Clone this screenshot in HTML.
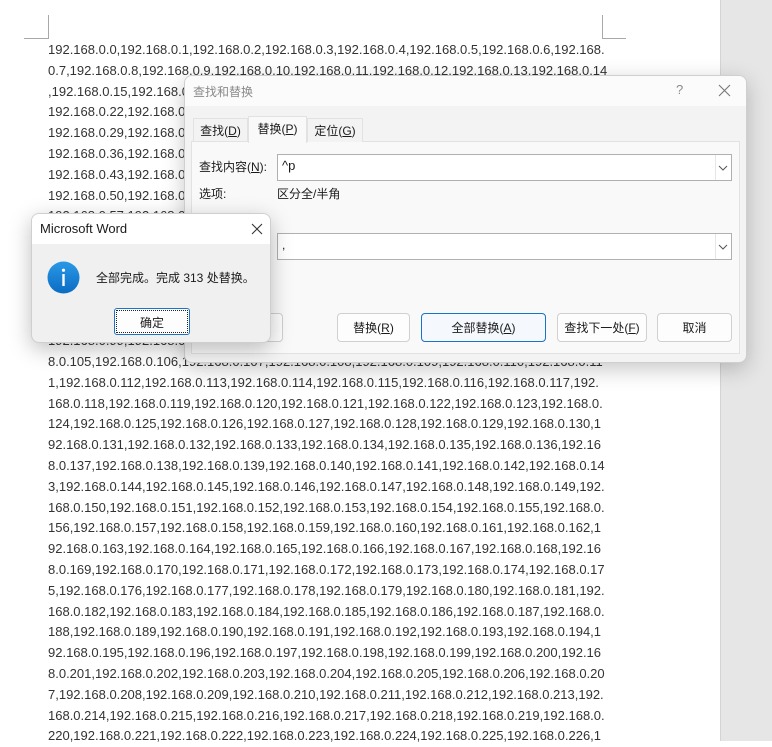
<!DOCTYPE html>
<html><head><meta charset="utf-8">
<style>
*{margin:0;padding:0;box-sizing:border-box}
body{width:772px;height:741px;overflow:hidden;background:#fff;position:relative;font-family:"Liberation Sans","Noto Sans CJK SC",sans-serif}
.gray{position:absolute;left:720px;top:0;width:52px;height:741px;background:#e6e6e6;border-left:1px solid #d4d4d4}
.mk{position:absolute;border-color:#a8a8a8;border-style:solid;border-width:0}
#doc{position:absolute;left:48px;top:40px;font-size:13px;color:#333;line-height:20.8px;white-space:nowrap}
.dlg{position:absolute;left:184px;top:75px;width:563px;height:288px;background:#f3f3f3;border:1px solid #cfcfcf;border-radius:8px;box-shadow:0 6px 22px rgba(0,0,0,.22);overflow:hidden;font-size:12px;color:#1a1a1a}
.dlg .tb{height:30px;background:#fbfbfb;position:relative}
.tab{position:absolute;top:42px;height:24px;padding-top:3px;text-align:center;border:1px solid #e2e2e2;border-bottom:none;background:#f3f3f3}
.panel{position:absolute;left:6px;top:65px;width:549px;height:213px;background:#f9f9f9;border:1px solid #e2e2e2}
.inp{position:absolute;background:#fff;border:1px solid #b0b0b0;height:27px}
.inp .dd{position:absolute;right:0;top:0;width:16px;height:25px;border-left:1px solid #e6e6e6}
.btn{position:absolute;top:237px;height:29px;background:#fdfdfd;border:1px solid #d0d0d0;border-radius:4px;text-align:center;padding-top:5px;font-size:12px}
.msg{position:absolute;left:31px;top:213px;width:240px;height:130px;background:#f0f0f0;border:1px solid #cfcfcf;border-radius:8px;box-shadow:0 6px 22px rgba(0,0,0,.25);overflow:hidden;font-size:12px;color:#1a1a1a}
u{text-decoration:underline}
</style></head><body>
<div class="gray"></div>
<div class="mk" style="left:24px;top:15px;width:25px;height:24px;border-right-width:1px;border-bottom-width:1px"></div>
<div class="mk" style="left:602px;top:15px;width:24px;height:24px;border-left-width:1px;border-bottom-width:1px"></div>
<div id="doc">
192.168.0.0,192.168.0.1,192.168.0.2,192.168.0.3,192.168.0.4,192.168.0.5,192.168.0.6,192.168.<br>
0.7,192.168.0.8,192.168.0.9,192.168.0.10,192.168.0.11,192.168.0.12,192.168.0.13,192.168.0.14<br>
,192.168.0.15,192.168.0.16,192.168.0.17,192.168.0.18,192.168.0.19,192.168.0.20,192.168.0.21,<br>
192.168.0.22,192.168.0.23,192.168.0.24,192.168.0.25,192.168.0.26,192.168.0.27,192.168.0.28,<br>
192.168.0.29,192.168.0.30,192.168.0.31,192.168.0.32,192.168.0.33,192.168.0.34,192.168.0.35,<br>
192.168.0.36,192.168.0.37,192.168.0.38,192.168.0.39,192.168.0.40,192.168.0.41,192.168.0.42,<br>
192.168.0.43,192.168.0.44,192.168.0.45,192.168.0.46,192.168.0.47,192.168.0.48,192.168.0.49,<br>
192.168.0.50,192.168.0.51,192.168.0.52,192.168.0.53,192.168.0.54,192.168.0.55,192.168.0.56,<br>
192.168.0.57,192.168.0.58,192.168.0.59,192.168.0.60,192.168.0.61,192.168.0.62,192.168.0.63,<br>
192.168.0.64,192.168.0.65,192.168.0.66,192.168.0.67,192.168.0.68,192.168.0.69,192.168.0.70,<br>
192.168.0.71,192.168.0.72,192.168.0.73,192.168.0.74,192.168.0.75,192.168.0.76,192.168.0.77,<br>
192.168.0.78,192.168.0.79,192.168.0.80,192.168.0.81,192.168.0.82,192.168.0.83,192.168.0.84,<br>
192.168.0.85,192.168.0.86,192.168.0.87,192.168.0.88,192.168.0.89,192.168.0.90,192.168.0.91,<br>
192.168.0.92,192.168.0.93,192.168.0.94,192.168.0.95,192.168.0.96,192.168.0.97,192.168.0.98,<br>
192.168.0.99,192.168.0.100,192.168.0.101,192.168.0.102,192.168.0.103,192.168.0.104,192.16<br>
8.0.105,192.168.0.106,192.168.0.107,192.168.0.108,192.168.0.109,192.168.0.110,192.168.0.11<br>
1,192.168.0.112,192.168.0.113,192.168.0.114,192.168.0.115,192.168.0.116,192.168.0.117,192.<br>
168.0.118,192.168.0.119,192.168.0.120,192.168.0.121,192.168.0.122,192.168.0.123,192.168.0.<br>
124,192.168.0.125,192.168.0.126,192.168.0.127,192.168.0.128,192.168.0.129,192.168.0.130,1<br>
92.168.0.131,192.168.0.132,192.168.0.133,192.168.0.134,192.168.0.135,192.168.0.136,192.16<br>
8.0.137,192.168.0.138,192.168.0.139,192.168.0.140,192.168.0.141,192.168.0.142,192.168.0.14<br>
3,192.168.0.144,192.168.0.145,192.168.0.146,192.168.0.147,192.168.0.148,192.168.0.149,192.<br>
168.0.150,192.168.0.151,192.168.0.152,192.168.0.153,192.168.0.154,192.168.0.155,192.168.0.<br>
156,192.168.0.157,192.168.0.158,192.168.0.159,192.168.0.160,192.168.0.161,192.168.0.162,1<br>
92.168.0.163,192.168.0.164,192.168.0.165,192.168.0.166,192.168.0.167,192.168.0.168,192.16<br>
8.0.169,192.168.0.170,192.168.0.171,192.168.0.172,192.168.0.173,192.168.0.174,192.168.0.17<br>
5,192.168.0.176,192.168.0.177,192.168.0.178,192.168.0.179,192.168.0.180,192.168.0.181,192.<br>
168.0.182,192.168.0.183,192.168.0.184,192.168.0.185,192.168.0.186,192.168.0.187,192.168.0.<br>
188,192.168.0.189,192.168.0.190,192.168.0.191,192.168.0.192,192.168.0.193,192.168.0.194,1<br>
92.168.0.195,192.168.0.196,192.168.0.197,192.168.0.198,192.168.0.199,192.168.0.200,192.16<br>
8.0.201,192.168.0.202,192.168.0.203,192.168.0.204,192.168.0.205,192.168.0.206,192.168.0.20<br>
7,192.168.0.208,192.168.0.209,192.168.0.210,192.168.0.211,192.168.0.212,192.168.0.213,192.<br>
168.0.214,192.168.0.215,192.168.0.216,192.168.0.217,192.168.0.218,192.168.0.219,192.168.0.<br>
220,192.168.0.221,192.168.0.222,192.168.0.223,192.168.0.224,192.168.0.225,192.168.0.226,1
</div>

<div class="dlg">
  <div class="tb">
    <span style="position:absolute;left:8px;top:7px;color:#8a8a8a">查找和替换</span>
    <span style="position:absolute;left:491px;top:6px;color:#8a8a8a;font-size:13px">?</span>
    <svg style="position:absolute;left:533px;top:8px" width="13" height="13" viewBox="0 0 13 13"><path d="M1 1L12 12M12 1L1 12" stroke="#777" stroke-width="1.1"/></svg>
  </div>
  <div class="tab" style="left:8px;width:55px">查找(<u>D</u>)</div>
  <div class="panel"></div>
  <div class="tab" style="left:63px;width:59px;background:#f9f9f9;top:40px;height:27px;z-index:2">替换(<u>P</u>)</div>
  <div class="tab" style="left:122px;width:56px">定位(<u>G</u>)</div>
  <div style="position:absolute;left:14px;top:82px">查找内容(<u>N</u>):</div>
  <div class="inp" style="left:92px;top:78px;width:455px"><span style="position:absolute;left:4px;top:3px;font-size:13px">^p</span><div class="dd"><svg width="14" height="25" viewBox="0 0 14 25"><path d="M3 11l4 4 4-4" fill="none" stroke="#555"/></svg></div></div>
  <div style="position:absolute;left:14px;top:109px">选项:</div>
  <div style="position:absolute;left:92px;top:109px">区分全/半角</div>
  <div class="inp" style="left:92px;top:157px;width:455px"><span style="position:absolute;left:4px;top:4px">,</span><div class="dd"><svg width="14" height="25" viewBox="0 0 14 25"><path d="M3 11l4 4 4-4" fill="none" stroke="#555"/></svg></div></div>
  <div class="btn" style="left:20px;width:78px"></div>
  <div class="btn" style="left:152px;width:73px">替换(<u>R</u>)</div>
  <div class="btn" style="left:236px;width:125px;background:#f5f9fd;border-color:#1a73c8">全部替换(<u>A</u>)</div>
  <div class="btn" style="left:372px;width:90px">查找下一处(<u>F</u>)</div>
  <div class="btn" style="left:472px;width:75px">取消</div>
</div>

<div class="msg">
  <div style="height:30px;background:#fff;position:relative">
    <span style="position:absolute;left:8px;top:7px;font-size:13px">Microsoft Word</span>
    <svg style="position:absolute;left:219px;top:9px" width="12" height="12" viewBox="0 0 12 12"><path d="M1 1L11 11M11 1L1 11" stroke="#333" stroke-width="1.1"/></svg>
  </div>
  <svg style="position:absolute;left:15px;top:47px" width="33" height="33" viewBox="0 0 33 33"><defs><linearGradient id="g" x1="0" y1="0" x2="0" y2="1"><stop offset="0" stop-color="#2a98e6"/><stop offset="1" stop-color="#0a6cc4"/></linearGradient></defs><circle cx="16.5" cy="16.5" r="16" fill="url(#g)"/><rect x="15.3" y="13" width="2.4" height="12" fill="#fff"/><circle cx="16.5" cy="9.2" r="1.6" fill="#fff"/></svg>
  <div style="position:absolute;left:64px;top:55px">全部完成。完成 313 处替换。</div>
  <div style="position:absolute;left:82px;top:94px;width:76px;height:27px;border:1px solid #1a73c8;border-radius:3px;background:#fdfdfd;padding:1px">
    <div style="border:1px dotted #222;height:23px;text-align:center;padding-top:3px">确定</div>
  </div>
</div>
</body></html>
